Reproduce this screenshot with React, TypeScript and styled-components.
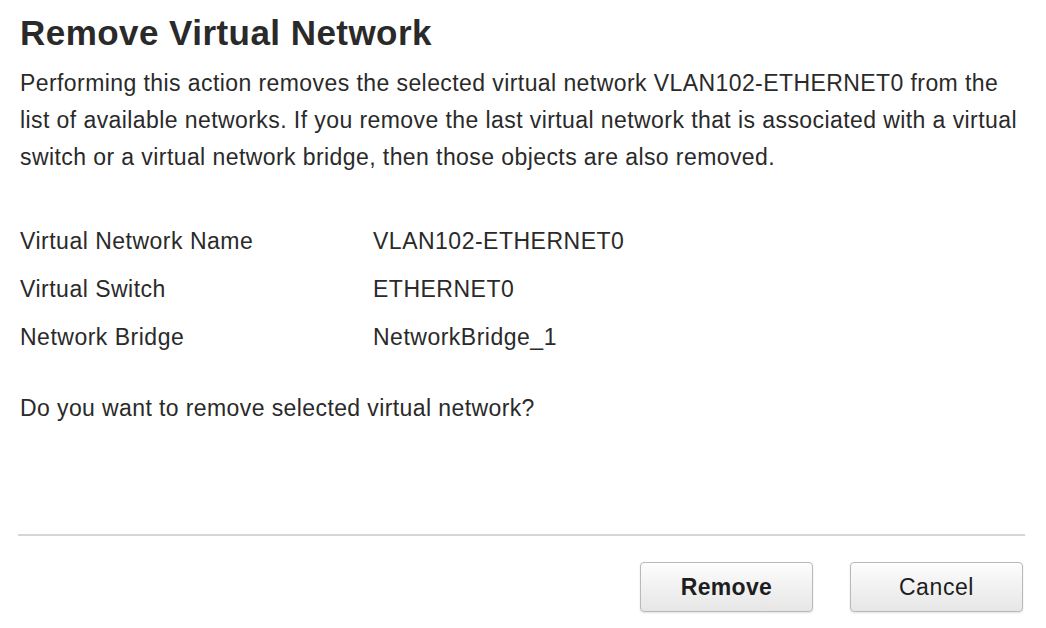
import React from "react";
import styled, { createGlobalStyle } from "styled-components";

const Global = createGlobalStyle`
  html, body { margin: 0; padding: 0; background: #ffffff; }
  body { font-family: "Liberation Sans", Arial, sans-serif; color: #222; }
`;

const Dialog = styled.div`
  box-sizing: border-box;
  height: 628px;
  display: flex;
  flex-direction: column;
  padding: 13px 21px 16px 18px;
`;

const Title = styled.h1`
  margin: 0;
  padding-left: 2px;
  font-size: 35px;
  line-height: 40px;
  font-weight: 700;
  letter-spacing: 0.45px;
  color: #2a2a2a;
`;

const Description = styled.p`
  margin: 12px 0 0;
  padding-left: 2px;
  font-size: 23px;
  line-height: 37px;
  letter-spacing: 0.42px;
  color: #2a2a2a;
`;

const Details = styled.div`
  margin-top: 41px;
  padding-left: 2px;
  display: flex;
  flex-direction: column;
`;

const Row = styled.div`
  display: grid;
  grid-template-columns: 353px 1fr;
  height: 48px;
  line-height: 48px;
  font-size: 23px;
  letter-spacing: 0.5px;
  color: #2a2a2a;
`;

const Question = styled.p`
  margin: 29px 0 0;
  padding-left: 2px;
  font-size: 23px;
  line-height: 37px;
  letter-spacing: 0.4px;
  color: #2a2a2a;
`;

const Footer = styled.div`
  margin-top: auto;
  display: flex;
  flex-direction: column;
`;

const Divider = styled.hr`
  margin: 0;
  border: none;
  height: 2px;
  background: #d6d6d6;
`;

const Actions = styled.div`
  display: flex;
  justify-content: flex-end;
  gap: 37px;
  margin-top: 26px;
  padding-right: 2px;
`;

const Button = styled.button<{ $primary?: boolean }>`
  box-sizing: border-box;
  width: 173px;
  height: 50px;
  border: 1px solid #b9b9b9;
  border-radius: 4px;
  background: linear-gradient(#fdfdfd, #e6e6e6);
  box-shadow: 0 1px 2px rgba(0, 0, 0, 0.12);
  font-family: "Liberation Sans", Arial, sans-serif;
  font-size: 23px;
  letter-spacing: ${(p) => (p.$primary ? "0.3px" : "0.6px")};
  font-weight: ${(p) => (p.$primary ? 700 : 400)};
  color: #1e1e1e;
  cursor: pointer;
`;

const rows: [string, string][] = [
  ["Virtual Network Name", "VLAN102-ETHERNET0"],
  ["Virtual Switch", "ETHERNET0"],
  ["Network Bridge", "NetworkBridge_1"],
];

export default function App() {
  return (
    <>
      <Global />
      <Dialog>
        <Title>Remove Virtual Network</Title>
        <Description>
          Performing this action removes the selected virtual network VLAN102-ETHERNET0 from the
          <br />
          list of available networks. If you remove the last virtual network that is associated with a virtual
          <br />
          switch or a virtual network bridge, then those objects are also removed.
        </Description>
        <Details>
          {rows.map(([label, value]) => (
            <Row key={label}>
              <span>{label}</span>
              <span>{value}</span>
            </Row>
          ))}
        </Details>
        <Question>Do you want to remove selected virtual network?</Question>
        <Footer>
          <Divider />
          <Actions>
            <Button $primary>Remove</Button>
            <Button>Cancel</Button>
          </Actions>
        </Footer>
      </Dialog>
    </>
  );
}
